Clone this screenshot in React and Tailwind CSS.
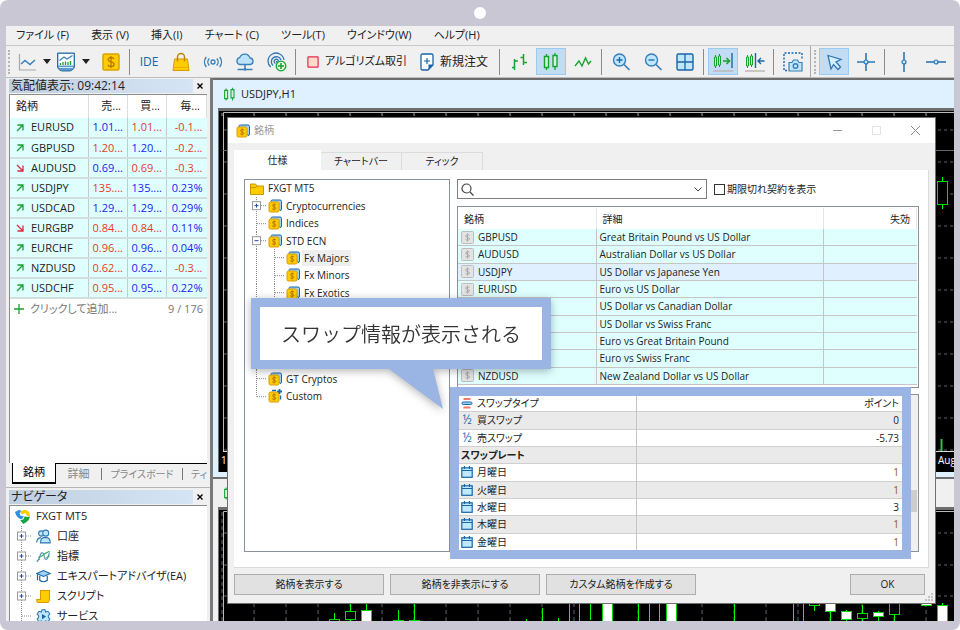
import { useState } from "react";

const quotes = [
  { name: "EURUSD", up: true, sell: "1.01...", buy: "1.01...", day: "-0.1...", c: [1, 0, 0] },
  { name: "GBPUSD", up: true, sell: "1.20...", buy: "1.20...", day: "-0.2...", c: [0, 1, 0] },
  { name: "AUDUSD", up: false, sell: "0.69...", buy: "0.69...", day: "-0.3...", c: [1, 0, 0] },
  { name: "USDJPY", up: true, sell: "135....", buy: "135....", day: "0.23%", c: [0, 1, 1] },
  { name: "USDCAD", up: true, sell: "1.29...", buy: "1.29...", day: "0.29%", c: [1, 1, 1] },
  { name: "EURGBP", up: false, sell: "0.84...", buy: "0.84...", day: "0.11%", c: [0, 0, 1] },
  { name: "EURCHF", up: true, sell: "0.96...", buy: "0.96...", day: "0.04%", c: [0, 1, 1] },
  { name: "NZDUSD", up: true, sell: "0.62...", buy: "0.62...", day: "-0.3...", c: [0, 1, 0] },
  { name: "USDCHF", up: true, sell: "0.95...", buy: "0.95...", day: "0.22%", c: [0, 1, 1] },
];

const symbols = [
  { name: "GBPUSD", detail: "Great Britain Pound vs US Dollar" },
  { name: "AUDUSD", detail: "Australian Dollar vs US Dollar" },
  { name: "USDJPY", detail: "US Dollar vs Japanese Yen", selected: true },
  { name: "EURUSD", detail: "Euro vs US Dollar" },
  { name: "", detail: "US Dollar vs Canadian Dollar" },
  { name: "", detail: "US Dollar vs Swiss Franc" },
  { name: "", detail: "Euro vs Great Britain Pound" },
  { name: "", detail: "Euro vs Swiss Franc" },
  { name: "NZDUSD", detail: "New Zealand Dollar vs US Dollar" },
];

const properties = [
  { icon: "type", name: "スワップタイプ", value: "ポイント" },
  { icon: "half", name: "買スワップ", value: "0" },
  { icon: "half", name: "売スワップ", value: "-5.73" },
  { name: "スワップレート", value: "" },
  { icon: "day", name: "月曜日", value: "1", brown: true },
  { icon: "day", name: "火曜日", value: "1", brown: true },
  { icon: "day", name: "水曜日", value: "3" },
  { icon: "day", name: "木曜日", value: "1", brown: true },
  { icon: "day", name: "金曜日", value: "1", brown: true },
];

const tree = [
  { name: "Cryptocurrencies", depth: 1, box: "+" },
  { name: "Indices", depth: 1 },
  { name: "STD ECN", depth: 1, box: "-" },
  { name: "Fx Majors", depth: 2, selected: true },
  { name: "Fx Minors", depth: 2 },
  { name: "Fx Exotics", depth: 2 },
  { depth: 0 },
  { depth: 0 },
  { depth: 0 },
  { depth: 0 },
  { name: "GT Cryptos", depth: 1 },
  { name: "Custom", depth: 1, last: true, custom: true },
];

/* ---------- icons ---------- */

const Icon = ({ children, className = "size-5" }) => (
  <svg viewBox="0 0 20 20" fill="none" className={`shrink-0 ${className}`} aria-hidden="true">
    {children}
  </svg>
);

const LineChartIcon = () => (
  <Icon>
    <path d="M2.5 2v16H19" stroke="#a8a8a8" strokeWidth="1.2" />
    <path d="M4 12l4-3.5 5 4L18 8" stroke="#3a7fb8" strokeWidth="1.5" />
  </Icon>
);

const TemplateIcon = () => (
  <Icon>
    <path d="M1.5 1h17v14c-1 2.500-3 4-5 4h-7c-2.500 0-4-1.500-5-4z" fill="#5b9bcb" stroke="#2f6f9f" />
    <path d="M2.500 2h15v11.500h-15z" fill="#fff" />
    <path d="M3.500 8.500L8 5l3 2 5.500-3.500" stroke="#3a7fb8" strokeWidth="1.300" />
    <path d="M4.500 13v-2M7 13v-3M9.500 13V9.500M12 13v-3M14.500 13V9" stroke="#14a32e" strokeWidth="1.300" />
    <path d="M3 15.500h14" stroke="#d5e8f6" />
  </Icon>
);

const CoinIcon = () => (
  <Icon>
    <rect x="2" y="2" width="16" height="16" rx="1.500" fill="#fc0" stroke="#dba000" strokeWidth="1.500" />
    <path d="M13 6.800c-.6-1-1.700-1.300-3-1.300-1.600 0-2.900.7-2.900 2.100 0 3.100 6 1.500 6 4.600 0 1.500-1.400 2.300-3.100 2.300-1.400 0-2.600-.5-3.200-1.600M10 4v12" stroke="#b87800" strokeWidth="1.300" />
  </Icon>
);

const BagIcon = () => (
  <Icon>
    <path d="M3.500 7h13l1.500 11.500H2z" fill="#fc0" stroke="#d99a00" />
    <path d="M6.500 9.500V5a3.500 3.500 0 017 0v4.500" stroke="#c08400" strokeWidth="1.500" />
    <path d="M2.500 15.500h15" stroke="#eeb000" />
  </Icon>
);

const SignalIcon = () => (
  <Icon>
    <circle cx="10" cy="10" r="2" stroke="#3a7fb8" strokeWidth="1.300" />
    <path d="M6.300 6.500a5 5 0 000 7M13.700 6.500a5 5 0 010 7M3.300 5a8 8 0 000 10M16.700 5a8 8 0 010 10" stroke="#3a7fb8" strokeWidth="1.400" />
  </Icon>
);

const CloudIcon = () => (
  <Icon>
    <path d="M5 12.500a3.500 3.500 0 01-.3-6.900A5.500 5.500 0 0115 6a3.300 3.300 0 01.5 6.500z" fill="#bde3fa" stroke="#3a7fb8" strokeWidth="1.300" />
    <path d="M10 12.500v4M2.500 17.500h15" stroke="#3a7fb8" strokeWidth="1.500" />
    <circle cx="10" cy="17.300" r="1.400" fill="#3a7fb8" />
  </Icon>
);

const RadarIcon = () => (
  <Icon>
    <path d="M3.700 15A8 8 0 1117 8M6 13.500A5 5 0 1114 8M8.500 11.500a2.200 2.200 0 113-2.500" stroke="#2f77b3" strokeWidth="1.300" />
    <circle cx="9.800" cy="9.800" r="1" fill="#2f77b3" />
    <circle cx="14" cy="14" r="4.800" fill="#dff8e3" stroke="#14a32e" strokeWidth="1.300" />
    <path d="M14 11v6M11 14h6" stroke="#14a32e" strokeWidth="1.500" />
  </Icon>
);

const StopIcon = () => (
  <Icon className="size-3">
    <rect x="1.500" y="1.500" width="17" height="17" rx="1" fill="#fddcc9" stroke="#e8284e" strokeWidth="2" />
  </Icon>
);

const NewOrderIcon = () => (
  <svg viewBox="0 0 14 18" fill="none" className="h-[18px] w-3.5 shrink-0" aria-hidden="true">
    <path d="M1 2.500Q1 1 2.500 1h9Q13 1 13 2.500V12l-5 5H2.500Q1 17 1 15.500z" fill="#fff" stroke="#1766a6" strokeWidth="1.300" />
    <path d="M13 11.500H8.500V17z" fill="#1766a6" />
    <path d="M7 5v6M4 8h6" stroke="#1766a6" strokeWidth="1.200" />
  </svg>
);

const BarsIcon = () => (
  <Icon>
    <path d="M5.500 7v11M3 15.500h2.500M5.500 9H9M14.500 2v11M11.500 5.500h3M14.500 10.500H18" stroke="#14a32e" strokeWidth="1.500" />
  </Icon>
);

const CandlesIcon = ({ className }) => (
  <Icon className={className}>
    <path d="M5.500 2v16M14 1v17" stroke="#14a32e" strokeWidth="1.300" />
    <path d="M3.500 4.500h4v11h-4zM12 3.500h4v11h-4z" fill="#d8f3e0" stroke="#14a32e" strokeWidth="1.400" />
  </Icon>
);

const ZigzagIcon = () => (
  <Icon>
    <path d="M2 14l4-5 3 5 3.500-8 3 6L18 9" stroke="#14a32e" strokeWidth="1.400" />
  </Icon>
);

const ZoomIcon = ({ plus }) => (
  <Icon>
    <circle cx="8.500" cy="8" r="6" fill="#bfe6fb" stroke="#3a7fb8" strokeWidth="1.400" />
    <path d="M13 12.500l5.500 5.500" stroke="#3a7fb8" strokeWidth="1.700" />
    <path d={plus ? "M5.500 8h6M8.500 5v6" : "M5.500 8h6"} stroke="#1766a6" strokeWidth="1.300" />
  </Icon>
);

const GridIcon = () => (
  <Icon>
    <rect x="2" y="2" width="16" height="16" rx="1.500" fill="#bfe6fb" stroke="#1766a6" strokeWidth="1.400" />
    <path d="M10 2v16M2 10h16" stroke="#1766a6" strokeWidth="1.300" />
  </Icon>
);

const ShiftIcon = ({ left }) => (
  <Icon>
    <path d="M2.500 3v13M6.500 2v13" stroke="#14a32e" />
    <path d="M1.500 5h2v9h-2zM5.500 4h2v9h-2z" fill="#d8f3e0" stroke="#14a32e" />
    {left ? (
      <path d="M10.500 1v15M19.500 9H13M16 6l-3 3 3 3" stroke="#1766a6" strokeWidth="1.400" />
    ) : (
      <>
        <path d="M10 9h6M13.500 6l3 3-3 3" stroke="#14a32e" strokeWidth="1.600" />
        <path d="M19 1v15" stroke="#1766a6" strokeWidth="1.400" />
      </>
    )}
    <path d="M0 19h20" stroke="#b8b8b8" strokeWidth="1.500" />
  </Icon>
);

const CameraIcon = () => (
  <Icon>
    <path d="M4 18.500H1V1h18v6" stroke="#1766a6" strokeWidth="1.400" strokeDasharray="2 1.500" />
    <path d="M6 10.500h3l1.500-2.500h4L16 10.500h3V19H6z" fill="#bfe6fb" stroke="#3a7fb8" strokeWidth="1.200" />
    <circle cx="12.500" cy="14" r="2.300" stroke="#3a7fb8" strokeWidth="1.400" />
  </Icon>
);

const CursorIcon = () => (
  <Icon>
    <path d="M4 3.500l13 4-5 2.500 4.500 5-2.500 2.500-4.500-5L7 17z" fill="#d6efff" stroke="#2f77b3" strokeWidth="1.300" />
  </Icon>
);

const LineToolIcon = ({ d }) => (
  <Icon>
    <path d={d} stroke="#2f77b3" strokeWidth="1.600" />
    <circle cx="10" cy="10" r="2" fill="#bfe6fb" stroke="#2f77b3" strokeWidth="1.200" />
  </Icon>
);

const DropArrow = () => (
  <svg viewBox="0 0 8 5" className="h-[5px] w-2 shrink-0" aria-hidden="true">
    <path d="M0 0h8L4 5z" fill="#222" />
  </svg>
);

const GroupIcon = ({ custom }) => (
  <svg viewBox="0 0 14 14" fill="none" className="size-3.5 shrink-0" aria-hidden="true">
    {custom ? (
      <path d="M4 1.500h4M11.500 0v5M9 2.500h5M12.500 6.500v4" stroke="#1766a6" strokeWidth="1.400" />
    ) : (
      <path d="M3 2.500Q3 1 4.500 1H12q1.500 0 1.500 1.500V10q0 1.500-1.500 1.500z" fill="#9fd4f5" stroke="#1766a6" />
    )}
    <rect x="1" y="3" width="10" height="10" rx="1.500" fill="#fc0" stroke="#dd9a00" />
    <path d="M8 6c-1-1-3.500-.8-3.500.6 0 1.800 3.300.9 3.300 2.700 0 1.300-2.600 1.500-3.600.4M6.100 4.500v7" stroke="#b87800" />
    {custom && <path d="M11.500 0v5M9 2.500h5" stroke="#1766a6" strokeWidth="1.500" />}
  </svg>
);

const FolderIcon = () => (
  <svg viewBox="0 0 14 12" className="h-3 w-3.5 shrink-0" aria-hidden="true">
    <path d="M.5 1h5l1.500 2h6.500v8.500H.5z" fill="#fc0" stroke="#cf9500" />
    <path d="M1 4.500h5L7 3" fill="none" stroke="#cf9500" />
  </svg>
);

const GreyCoinIcon = () => (
  <svg viewBox="0 0 13 13" fill="none" className="size-[13px] shrink-0" aria-hidden="true">
    <rect x=".5" y=".5" width="12" height="12" rx="1" fill="#e3e3e3" stroke="#bdbdbd" />
    <path d="M8.500 4.500c-1-1.200-3.800-1-3.800.6 0 2 3.800 1 3.800 2.800 0 1.500-3 1.700-4 .5M6.500 2.500v8" stroke="#a9a9a9" />
  </svg>
);

const PropertyIcon = ({ kind }) => {
  if (kind === "half") {
    return (
      <span className="h-3 w-3 shrink-0 text-center text-[12px] leading-3 text-[#1766a6]">½</span>
    );
  }
  return (
    <svg viewBox="0 0 12 12" fill="none" className="size-3 shrink-0" aria-hidden="true">
      {kind === "type" ? (
        <>
          <path d="M2.500 2h7M2.500 10.500h7" stroke="#ef7a68" strokeWidth="2" />
          <rect x="1" y="5" width="10" height="2.500" rx="1.200" fill="#9fd4f5" stroke="#1766a6" />
        </>
      ) : (
        <>
          <rect x=".8" y="1.800" width="10.400" height="9.500" fill="#bfe9ff" stroke="#1766a6" strokeWidth="1.200" />
          <path d="M1 4.500h10M3.500 0v3M8.500 0v3" stroke="#1766a6" strokeWidth="1.200" />
        </>
      )}
    </svg>
  );
};

const TrendArrow = ({ up }) => (
  <svg viewBox="0 0 8 8" fill="none" className="size-2 shrink-0" aria-hidden="true">
    <path
      d={up ? "M1 7l5.500-5.500M1.500 1h5.500v5.500" : "M1 1l5.500 5.500M1.500 7h5.500V1.500"}
      stroke={up ? "#14a32e" : "#e0283c"}
      strokeWidth="1.300"
    />
  </svg>
);

// one cell of the dotted lines in front of a tree item
const Guide = ({ box, last, branch = true, className }) => (
  <svg className={`h-full shrink-0 self-stretch overflow-visible ${className}`} aria-hidden="true">
    <line x1="6.500" x2="6.500" y1="0" y2={last ? "50%" : "100%"} stroke="#8a8a8a" strokeDasharray="1 1" />
    {branch && <line x1="7" x2="16" y1="50%" y2="50%" stroke="#8a8a8a" strokeDasharray="1 1" />}
    {box && (
      <svg y="50%" overflow="visible">
        <rect x="2.500" y="-4" width="8" height="8" fill="#fff" stroke="#999" />
        <path d={box === "+" ? "M4.500 0h4M6.500-2v4" : "M4.500 0h4"} stroke="#234a9c" />
      </svg>
    )}
  </svg>
);

/* ---------- top bars ---------- */

const MenuBar = () => {
  const items = ["ファイル (F)", "表示 (V)", "挿入(I)", "チャート (C)", "ツール(T)", "ウインドウ(W)", "ヘルプ(H)"];
  return (
    <nav className="flex h-5 shrink-0 items-center gap-[22px] border-b border-[#c8c8c8] pl-2.5 text-[11px]">
      {items.map((item) => (
        <button key={item} type="button" className="whitespace-nowrap">
          {item}
        </button>
      ))}
    </nav>
  );
};

const ToolButton = ({ label, active, className = "w-[30px] justify-center", children }) => (
  <button
    type="button"
    aria-label={label}
    className={`flex h-[27px] shrink-0 items-center border ${
      active ? "border-[#99cbf3] bg-[#c2dcf3]" : "border-transparent"
    } ${className}`}
  >
    {children}
  </button>
);

const Sep = () => <div className="ml-px mr-0.5 h-[26px] w-px shrink-0 bg-[#8b8b8b]" />;

const Grip = () => <div className="h-6 shrink-0 border-l-2 border-dotted border-[#b5b5b5]" />;

const Toolbar = () => (
  <div className="flex h-8 shrink-0 items-center gap-0.5 overflow-hidden border-b border-[#bdbdbd] pl-0.5">
    <Grip />
    <ToolButton label="ライン" className="w-10 gap-1.5 pl-1">
      <LineChartIcon />
      <DropArrow />
    </ToolButton>
    <ToolButton label="テンプレート" className="w-10 gap-1.5 pl-px">
      <TemplateIcon />
      <DropArrow />
    </ToolButton>
    <ToolButton label="銘柄">
      <CoinIcon />
    </ToolButton>
    <Sep />
    <ToolButton className="w-[30px] justify-center text-[12px] text-[#1766a6]">IDE</ToolButton>
    <ToolButton label="マーケット">
      <BagIcon />
    </ToolButton>
    <ToolButton label="シグナル">
      <SignalIcon />
    </ToolButton>
    <ToolButton label="クラウド">
      <CloudIcon />
    </ToolButton>
    <ToolButton label="VPS">
      <RadarIcon />
    </ToolButton>
    <Sep />
    <ToolButton className="w-[115px] gap-1.5 pl-1.5 text-[11px] whitespace-nowrap">
      <StopIcon />
      アルゴリズム取引
    </ToolButton>
    <ToolButton className="w-[79px] gap-1.5 pl-0.5 text-[12px] whitespace-nowrap">
      <NewOrderIcon />
      新規注文
    </ToolButton>
    <Sep />
    <ToolButton label="バー">
      <BarsIcon />
    </ToolButton>
    <ToolButton label="ローソク足" active>
      <CandlesIcon />
    </ToolButton>
    <ToolButton label="折れ線">
      <ZigzagIcon />
    </ToolButton>
    <Sep />
    <ToolButton label="拡大">
      <ZoomIcon plus />
    </ToolButton>
    <ToolButton label="縮小">
      <ZoomIcon />
    </ToolButton>
    <ToolButton label="整列">
      <GridIcon />
    </ToolButton>
    <Sep />
    <ToolButton label="自動スクロール" active>
      <ShiftIcon />
    </ToolButton>
    <ToolButton label="シフト">
      <ShiftIcon left />
    </ToolButton>
    <Sep />
    <ToolButton label="スクリーンショット">
      <CameraIcon />
    </ToolButton>
    <div className="flex h-full w-[7px] shrink-0 items-center gap-[3px] border-l border-[#a8a8a8] pl-[3px]">
      <Grip />
    </div>
    <ToolButton label="カーソル" active>
      <CursorIcon />
    </ToolButton>
    <ToolButton label="十字">
      <LineToolIcon d="M10 1v18M1 10h18" />
    </ToolButton>
    <Sep />
    <ToolButton label="垂直線">
      <LineToolIcon d="M10 0v20" />
    </ToolButton>
    <ToolButton label="水平線">
      <LineToolIcon d="M0 10h20" />
    </ToolButton>
  </div>
);

/* ---------- left side ---------- */

const PanelTitle = ({ children }) => (
  <div className="flex h-3.5 shrink-0 items-center">
    <h2 className="flex h-full flex-1 items-center bg-linear-to-r from-[#bfcfe0] to-[#d6e5f5] pl-0.5 text-[12px] leading-3.5 whitespace-nowrap">
      {children}
    </h2>
    <button type="button" aria-label="閉じる" className="flex w-3.5 justify-center">
      <svg viewBox="0 0 6 6" className="size-1.5" aria-hidden="true">
        <path d="M.5.5l5 5M5.500.5l-5 5" stroke="#000" strokeWidth="1.400" />
      </svg>
    </button>
  </div>
);

const priceColor = (blue) => (blue ? "text-[#2222f0]" : "text-[#e63a1e]");

const MarketWatch = () => (
  <section className="flex min-h-0 flex-1 flex-col overflow-hidden pl-[3px] pr-[3px]">
    <PanelTitle>気配値表示: 09:42:14</PanelTitle>
    <div className="mt-px flex-1 overflow-hidden border-t border-l border-[#8d8d8d] bg-white">
      <table className="w-full table-fixed text-[11px] whitespace-nowrap">
        <colgroup>
          <col />
          <col className="w-[39px]" />
          <col className="w-[39px]" />
          <col className="w-10" />
        </colgroup>
        <thead>
          <tr className="h-[23px]">
            <th className="border-r border-[#dedede] pl-1.5 text-left font-normal">銘柄</th>
            <th className="border-r border-[#dedede] pr-1.5 text-right font-normal">売...</th>
            <th className="border-r border-[#dedede] pr-1.5 text-right font-normal">買...</th>
            <th className="border-r border-[#dedede] pr-1.5 text-right font-normal">毎...</th>
          </tr>
        </thead>
        <tbody>
          {quotes.map((q) => (
            <tr key={q.name} className="h-5 border-b-2 border-[#d3dedf] bg-[#dfffff]">
              <td className="border-r border-[#c3cccc] pl-1.5">
                <div className="flex items-center gap-[7px]">
                  <TrendArrow up={q.up} />
                  {q.name}
                </div>
              </td>
              <td className={`border-r border-[#c3cccc] pr-1 text-right ${priceColor(q.c[0])}`}>{q.sell}</td>
              <td className={`border-r border-[#c3cccc] pr-1 text-right ${priceColor(q.c[1])}`}>{q.buy}</td>
              <td className={`pr-1 text-right ${priceColor(q.c[2])}`}>{q.day}</td>
            </tr>
          ))}
        </tbody>
      </table>
      <div className="flex h-5 items-center gap-1.5 pr-1 pl-1 text-[11px] text-[#777]">
        <svg viewBox="0 0 10 10" className="size-2.5" aria-hidden="true">
          <path d="M5 0v10M0 5h10" stroke="#14a32e" strokeWidth="1.300" />
        </svg>
        <span className="flex-1">クリックして追加...</span>
        <span>9 / 176</span>
      </div>
    </div>
    <div className="flex h-6 shrink-0 items-start overflow-hidden pl-[3px] text-[10px] whitespace-nowrap text-[#888]">
      <button type="button" className="h-[21px] w-11 shrink-0 border-x border-b-2 border-black bg-white text-[11px] text-black">
        銘柄
      </button>
      <button type="button" className="h-[21px] w-[45px] shrink-0 border-t border-black text-[11px]">詳細</button>
      <button type="button" className="h-[21px] w-[82px] shrink-0 border-t border-black">
        <span className="block border-x border-[#777] leading-3">プライスボード</span>
      </button>
      <button type="button" className="h-[21px] flex-1 border-t border-black pl-2 text-left">ティック</button>
    </div>
  </section>
);

const navIcons = {
  accounts: (
    <>
      <circle cx="7" cy="6" r="3.500" fill="#bfe6fb" stroke="#2f77b3" strokeWidth="1.400" />
      <circle cx="13" cy="5.500" r="4" fill="#bfe6fb" stroke="#2f77b3" strokeWidth="1.400" />
      <path d="M1 18q0-6 5.500-6.500M6 18.500q0-6 4-7h5q4 1 4 7z" fill="#bfe6fb" stroke="#2f77b3" strokeWidth="1.400" />
    </>
  ),
  indicators: (
    <>
      <path d="M1 17C6 14 5 4 8.500 5s2 9 5 9 2.500-7 5-9" stroke="#5e95c0" strokeWidth="1.600" />
      <path d="M3 11l4-1 5-4 6-3M3 14h2M14 12l4-3" stroke="#2fae55" strokeWidth="1.400" />
    </>
  ),
  experts: (
    <>
      <path d="M1 6l9-4 9 4-9 4z" fill="#9fd4f5" stroke="#1766a6" strokeWidth="1.400" />
      <path d="M5 9v6q5 4 10 0V9M2 7v8" fill="none" stroke="#1766a6" strokeWidth="1.600" />
    </>
  ),
  scripts: (
    <path d="M6 2h12v11q0 4-2 5H3q-2 0-2-4h5z" fill="#fc0" stroke="#d99a00" strokeWidth="1.400" />
  ),
  services: (
    <>
      <path
        d="M8 1h4l.8 3L16 3l2.500 3.500L16.500 9v2l2 2.500L16 17l-3.200-1-.8 3H8l-.8-3L4 17l-2.500-3.500 2-2.500V9l-2-2.500L4 3l3.200 1z"
        fill="#bfe6fb"
        stroke="#2f77b3"
        strokeWidth="1.400"
      />
      <path d="M8 6.500l5.500 3.500L8 13.500z" fill="#1766a6" />
    </>
  ),
};

const navItems = [
  { icon: "accounts", name: "口座", box: "+" },
  { icon: "indicators", name: "指標", box: "+" },
  { icon: "experts", name: "エキスパートアドバイザ(EA)", box: "+" },
  { icon: "scripts", name: "スクリプト", box: "+" },
  { icon: "services", name: "サービス" },
];

const Navigator = () => (
  <section className="flex h-[134px] shrink-0 flex-col overflow-hidden border-t border-[#b5b5b5] pt-0.5 pr-[3px] pl-[3px]">
    <PanelTitle>ナビゲータ</PanelTitle>
    <ul className="mt-px flex-1 border-t border-l border-[#8d8d8d] bg-white pl-[5px] text-[11px]">
      <li className="flex h-5 items-center gap-1.5">
        <Icon className="size-[15px]">
          <path d="M0 4l6-3 3 2-3 2.500 1 3 5 1.500-3 3.500q-7-1-9-9.500z" fill="#2f8fe0" />
          <path d="M7 3l7-2 5 3 1 6-4-1-2-3.500L9 7z" fill="#fc0" />
          <path d="M13 9.500l3 1 4-.5q-1 6-9 10l-4-5 4-1z" fill="#18a548" />
        </Icon>
        FXGT MT5
      </li>
      {navItems.map((n) => (
        <li key={n.name} className="flex h-5 items-center whitespace-nowrap">
          <Guide box={n.box} className="w-[21px]" />
          <Icon className="mr-1.5 size-[15px]">{navIcons[n.icon]}</Icon>
          {n.name}
        </li>
      ))}
    </ul>
  </section>
);

/* ---------- charts ---------- */

const columns = Array.from({ length: 24 }, (_, i) => 3 + i * 32);
const levels = Array.from({ length: 11 }, (_, i) => 19 + i * 32);

// x centre, wick top, wick bottom, body top, body bottom, filled
const candles = [
  [115, 103, 109, 109, 115, false],
  [131, 93, 112, 101, 110, false],
  [147, 93, 112, 100, 115, true],
  [179, 100, 110, 110, 116, false],
  [195, 93, 110, 110, 116, true],
  [388, 93, 115, 90, 116, true],
  [452, 93, 115, 90, 116, true],
  [595, 93, 101, 93, 96, false],
  [611, 93, 115, 90, 102, true],
  [627, 100, 115, 101, 110, true],
  [643, 95, 115, 103, 109, false],
  [659, 101, 115, 102, 107, true],
  [675, 93, 115, 90, 105, false],
  [707, 90, 96, 90, 96, true],
  [723, 93, 115, 95, 116, true],
];
const wicks = [
  [307, 109, 115], [323, 98, 115], [339, 108, 115], [350, 90, 115], [360, 90, 115], [371, 90, 110],
  [419, 90, 115], [430, 90, 115], [440, 90, 115], [515, 90, 115], [574, 90, 115], [584, 90, 115],
];

const Candle = ({ data: [x, wt, wb, bt, bb, filled] }) => (
  <>
    <line x1={x + 0.5} x2={x + 0.5} y1={wt} y2={wb} stroke="#0f0" />
    <rect x={x - 4.5} y={bt + 0.5} width="10" height={bb - bt - 1} fill={filled ? "#fff" : "#000"} stroke="#00d800" />
  </>
);

const UpperChart = () => (
  <svg className="h-full w-full" aria-hidden="true">
    <path d="M4.500 340V1.500H900" fill="none" stroke="#b9b9b9" />
    {columns.map((x) => (
      <line key={x} x1={x} x2={x} y1="2" y2="5" stroke="#9aa4ac" />
    ))}
    {levels.map((y) => (
      <line key={y} x1="5" x2="900" y1={y} y2={y} stroke="#5a6670" strokeDasharray="3 3" />
    ))}
    <path d="M4 39.500h900" stroke="#5a6670" />
    <Candle data={[723, 66, 98, 70, 94, false]} />
    <path d="M722.500 328v12" stroke="#2fc04a" strokeWidth="2" />
    <path d="M4 340.500h900" stroke="#ddd" />
    <text x="2" y="353" fill="#fff" fontSize="10">1</text>
    <text x="719" y="353" fill="#fff" fontSize="10">Aug</text>
  </svg>
);

const LowerChart = () => (
  <svg className="h-full w-full" aria-hidden="true">
    <path d="M4.500 120V1.500H900" fill="none" stroke="#b9b9b9" />
    {columns.map((x) => (
      <line key={x} x1={x} x2={x} y1="2" y2="120" stroke="#5a6670" strokeDasharray="4 3" />
    ))}
    {[23, 55, 86].map((y) => (
      <line key={y} x1="5" x2="900" y1={y} y2={y} stroke="#5a6670" strokeDasharray="3 3" />
    ))}
    {wicks.map(([x, top, bottom]) => (
      <line key={x} x1={x + 0.5} x2={x + 0.5} y1={top} y2={bottom} stroke="#0f0" />
    ))}
    {candles.map((c) => (
      <Candle key={c[0]} data={c} />
    ))}
  </svg>
);

const ChartWindow = ({ title, active, className, children }) => (
  <section
    className={`flex flex-col overflow-hidden border-t-2 border-[#6d6d6d] pl-[5px] ${
      active ? "bg-[#dff0ff] pb-[5px]" : "bg-[#f0f0f0]"
    } ${className}`}
  >
    <h2 className="flex h-7 shrink-0 items-center gap-1 pl-1 text-[11px]">
      <CandlesIcon className="size-[15px]" />
      {title}
    </h2>
    <div className="min-h-0 flex-1 border-t-3 border-l border-[#6d6d6d] bg-black">{children}</div>
  </section>
);

/* ---------- symbols dialog ---------- */

const SymbolTree = () => (
  <div className="w-[206px] shrink-0 border border-[#8a919b] bg-white pl-[5px]">
    <ul className="flex h-[225px] flex-col text-[10px]">
      <li className="flex flex-1 items-center gap-1">
        <FolderIcon />
        FXGT MT5
      </li>
      {tree.map((t, i) => (
        <li key={i} className="flex min-h-0 flex-1 items-center">
          {t.depth !== 1 && <Guide branch={false} className="w-[18px]" />}
          {t.depth > 0 && <Guide box={t.box} last={t.last} className="w-[18px]" />}
          {t.name && (
            <>
              <GroupIcon custom={t.custom} />
              <span className={`ml-0.5 px-0.5 leading-4 ${t.selected ? "bg-[#efefef]" : ""}`}>{t.name}</span>
            </>
          )}
        </li>
      ))}
    </ul>
  </div>
);

const SearchRow = () => {
  const [expired, setExpired] = useState(false);
  return (
    <div className="flex h-5 shrink-0 items-center gap-[7px] text-[10px]">
      <label className="flex h-full w-[250px] items-center border border-[#7d7d7d] bg-white pr-1 pl-[3px]">
        <svg viewBox="0 0 13 13" fill="none" className="size-[13px] shrink-0" aria-hidden="true">
          <circle cx="5.500" cy="5.500" r="4.500" stroke="#444" strokeWidth="1.200" />
          <path d="M9 9l3.500 3.500" stroke="#444" strokeWidth="1.300" />
        </svg>
        <input type="text" aria-label="検索" className="min-w-0 flex-1 px-1 outline-none" />
        <svg viewBox="0 0 8 5" fill="none" className="h-[5px] w-2 shrink-0" aria-hidden="true">
          <path d="M.5.5L4 4 7.500.5" stroke="#444" />
        </svg>
      </label>
      <label className="flex items-center gap-0.5 whitespace-nowrap">
        <input
          type="checkbox"
          checked={expired}
          onChange={(e) => setExpired(e.target.checked)}
          className="size-[11px] appearance-none border border-[#333] bg-white checked:bg-[#333]"
        />
        期限切れ契約を表示
      </label>
    </div>
  );
};

const SymbolTable = () => (
  <div className="mt-[7px] h-[182px] shrink-0 overflow-hidden border border-[#8a919b] bg-white pt-px pr-px">
    <table className="h-[177px] w-full table-fixed text-[10px] leading-3 whitespace-nowrap">
      <colgroup>
        <col className="w-[138px]" />
        <col />
        <col className="w-[93px]" />
      </colgroup>
      <thead>
        <tr className="h-[21px]">
          <th className="border-r border-[#e5e5e5] pl-1.5 text-left font-normal">銘柄</th>
          <th className="border-r border-[#e5e5e5] pl-1.5 text-left font-normal">詳細</th>
          <th className="border-r border-[#e5e5e5] pr-1.5 text-right font-normal">失効</th>
        </tr>
      </thead>
      <tbody>
        {symbols.map((s) => (
          <tr key={s.detail} className={`border-b border-[#c5c5c5] ${s.selected ? "bg-[#e0f0ff]" : "bg-[#dfffff]"}`}>
            <td className="border-r border-[#c5c5c5] p-0 pl-[3px]">
              <div className="flex items-center gap-1">
                <GreyCoinIcon />
                {s.name}
              </div>
            </td>
            <td className="border-r border-[#c5c5c5] p-0 pl-[3px]">{s.detail}</td>
            <td className="p-0" />
          </tr>
        ))}
      </tbody>
    </table>
  </div>
);

const PropertyTable = () => (
  <div className="relative mt-[6px] flex min-h-0 flex-1 border border-[#8a919b] bg-white">
    <table className="h-full flex-1 table-fixed text-[10px] leading-3 whitespace-nowrap">
      <colgroup>
        <col className="w-[178px]" />
        <col />
      </colgroup>
      <tbody>
        {properties.map((p) => (
          <tr key={p.name} className="border-b border-[#cfcfcf] even:bg-[#eaeaea]">
            <td className="border-r border-[#c5c5c5] p-0 pl-[3px]">
              <div className={`flex h-3 items-center gap-1 ${p.icon ? "" : "font-bold"}`}>
                {p.icon && <PropertyIcon kind={p.icon} />}
                {p.name}
              </div>
            </td>
            <td className={`p-0 pr-1 text-right ${p.brown ? "text-[#8f5a1c]" : ""}`}>{p.value}</td>
          </tr>
        ))}
      </tbody>
    </table>
    <div className="flex w-[15px] shrink-0 flex-col items-end bg-[#f0f0f0] pr-px">
      <div className="mt-[95px] h-[22px] w-3 bg-[#cdcdcd]" />
    </div>
    <div className="absolute -top-2 right-[7px] -bottom-2 -left-2 border-9 border-[#9ab5e4]" />
  </div>
);

const DialogButton = ({ className = "w-[150px]", children }) => (
  <button type="button" className={`h-[21px] border border-[#adadad] bg-[#e1e1e1] text-[10px] ${className}`}>
    {children}
  </button>
);

const Callout = () => (
  <div className="absolute top-[180px] left-[23px] w-[300px] drop-shadow-[0_2px_4px_rgba(0,0,0,0.3)]">
    <p className="flex h-[71px] items-center justify-center border-9 border-[#9ab5e4] bg-white font-['Noto_Sans_CJK_JP',sans-serif] text-[20px] font-[350] text-[#333] [font-feature-settings:normal]">
      スワップ情報が表示される
    </p>
    <svg viewBox="0 0 300 40" className="block h-10 w-full" aria-hidden="true">
      <path d="M138 0h44l10 40z" fill="#9ab5e4" />
    </svg>
  </div>
);

const SymbolsDialog = () => (
  <div
    role="dialog"
    aria-label="銘柄"
    className="absolute top-[91px] right-[18px] bottom-[17px] left-[221px] flex flex-col border border-[#6f6f6f] bg-[#f0f0f0]"
  >
    <header className="flex h-[25px] shrink-0 items-center gap-1 bg-white pr-[15px] pl-2 text-[10px] text-[#999]">
      <GroupIcon />
      <h2 className="flex-1">銘柄</h2>
      <div className="flex items-center gap-[30px]">
        <button type="button" aria-label="最小化">
          <svg viewBox="0 0 9 9" className="size-[9px]" aria-hidden="true">
            <path d="M0 4.500h9" stroke="#999" />
          </svg>
        </button>
        <button type="button" aria-label="最大化" disabled>
          <svg viewBox="0 0 9 9" fill="none" className="size-[9px]" aria-hidden="true">
            <path d="M.5.5h8v8h-8z" stroke="#e3e3e3" />
          </svg>
        </button>
        <button type="button" aria-label="閉じる">
          <svg viewBox="0 0 9 9" className="size-[9px]" aria-hidden="true">
            <path d="M0 0l9 9M9 0L0 9" stroke="#888" />
          </svg>
        </button>
      </div>
    </header>

    <div className="flex min-h-0 flex-1 flex-col px-1.5 pt-[7px]">
      <div role="tablist" className="flex items-end text-[10px]">
        <button type="button" role="tab" aria-selected="true" className="h-5 w-[87px] bg-white">仕様</button>
        <button type="button" role="tab" aria-selected="false" className="h-[18px] w-[81px] border-t border-r border-[#dcdcdc]">チャートバー</button>
        <button type="button" role="tab" aria-selected="false" className="h-[18px] w-[81px] border-t border-r border-[#dcdcdc]">ティック</button>
      </div>
      <div className="flex min-h-0 flex-1 gap-[7px] border-r border-b border-[#dcdcdc] bg-white pt-[9px] pr-[9px] pb-[15px] pl-[10px]">
        <SymbolTree />
        <div className="flex min-w-0 flex-1 flex-col">
          <SearchRow />
          <SymbolTable />
          <PropertyTable />
        </div>
      </div>
    </div>

    <footer className="flex h-[35px] shrink-0 gap-1.5 pt-1.5 pr-2.5 pl-1.5">
      <DialogButton>銘柄を表示する</DialogButton>
      <DialogButton>銘柄を非表示にする</DialogButton>
      <DialogButton>カスタム銘柄を作成する</DialogButton>
      <DialogButton className="ml-auto w-[75px]">OK</DialogButton>
    </footer>
    <svg viewBox="0 0 8 8" className="absolute right-0.5 bottom-0.5 size-2" aria-hidden="true">
      <path d="M6 0h2v2H6zM3 3h2v2H3zM6 3h2v2H6zM0 6h2v2H0zM3 6h2v2H3zM6 6h2v2H6z" fill="#c3c3c3" />
    </svg>
    <Callout />
  </div>
);

const App = () => {
  return (
    <div className="h-screen bg-white font-['Open_Sans','Noto_Sans_CJK_JP',sans-serif] text-[#222]">
      <div className="flex h-full flex-col rounded-[8px] bg-[#c8c7d3] px-1.5 pb-[9px]">
        <div className="flex h-[26px] shrink-0 items-center justify-center">
          <div className="size-3 rounded-full bg-white" />
        </div>
        <main className="relative flex min-h-0 flex-1 flex-col overflow-hidden bg-[#f0f0f0] [font-feature-settings:'palt']">
          <MenuBar />
          <Toolbar />
          <div className="flex min-h-0 flex-1">
            <aside className="flex w-[207px] shrink-0 flex-col border-r-3 border-[#7a7a7a] pt-px">
              <MarketWatch />
              <Navigator />
            </aside>
            <div className="flex min-w-0 flex-1 flex-col">
              <ChartWindow title="USDJPY,H1" active className="min-h-0 flex-1">
                <UpperChart />
              </ChartWindow>
              <ChartWindow title="" className="h-36 shrink-0">
                <LowerChart />
              </ChartWindow>
            </div>
          </div>
          <SymbolsDialog />
        </main>
      </div>
    </div>
  );
};

export default App;
